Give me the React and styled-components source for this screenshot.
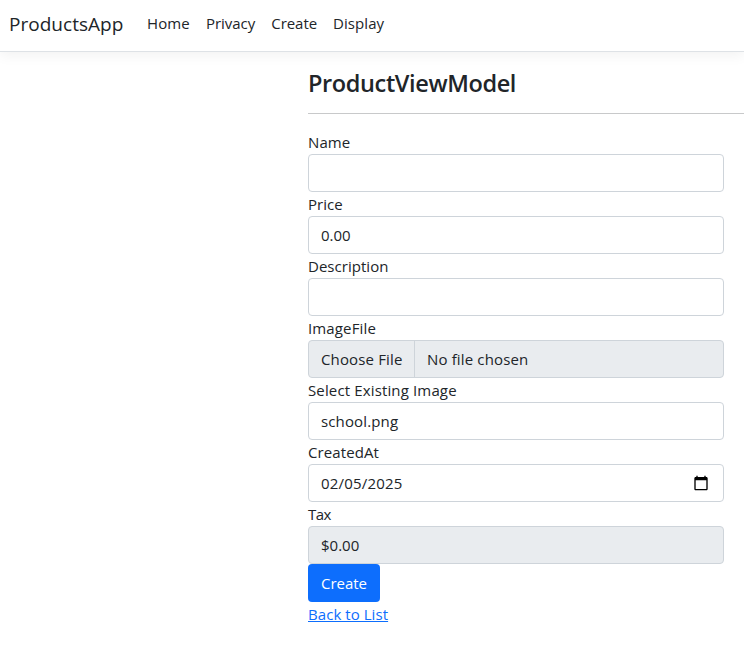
import React from 'react';
import styled, { createGlobalStyle } from 'styled-components';

const GlobalStyle = createGlobalStyle`
  *, *::before, *::after { box-sizing: border-box; }
  body {
    margin: 0;
    background: #fff;
    color: #212529;
    font: 400 15px/24px "Open Sans", "Noto Sans", sans-serif;
    overflow: hidden;
  }
`;

const Text = styled.span`
  letter-spacing: ${({ $tracking = 0.1 }) => $tracking}px;
  white-space: pre;
`;

const Header = styled.header`
  display: flex;
  align-items: center;
  height: 52px;
  padding: 0 0 5px 9px;
  border-bottom: 1px solid #dee2e6;
  box-shadow: 0 4px 12px rgba(0, 0, 0, 0.05);
`;

const Brand = styled.a`
  width: 130px;
  padding-top: 2px;
  font-size: 19px;
  line-height: 30px;
`;

const Nav = styled.nav`
  display: flex;
  gap: 16px;
  padding-left: 8px;
`;

const NavLink = styled.a`
  flex: none;
`;

const Main = styled.main`
  margin-left: 308px;
  padding-top: 17px;
`;

const Title = styled.h4`
  margin: 0;
  font-size: 23.5px;
  font-weight: 600;
  line-height: 29px;
  letter-spacing: -0.38px;
`;

const Divider = styled.hr`
  height: 1px;
  margin: 15px 0 16px;
  border: 0;
  background: #c8c9ca;
`;

const Form = styled.form`
  width: 416px;
`;

const Label = styled.label`
  display: block;
  height: 24px;
`;

const Control = styled.div`
  display: flex;
  align-items: center;
  height: 38px;
  padding: 0 12px;
  border: 1px solid #ced4da;
  border-radius: 4px;
  background: ${({ $muted }) => ($muted ? '#e9ecef' : '#fff')};
`;

const FileButton = styled.span`
  display: flex;
  flex: none;
  align-items: center;
  width: 94px;
  height: 36px;
  margin-right: 12px;
  border-right: 1px solid #ced4da;
`;

const Calendar = styled.svg`
  display: block;
  margin: 0 2px 0 auto;
`;

const Submit = styled.button`
  display: block;
  width: 72px;
  height: 38px;
  padding: 0;
  border: 0;
  border-radius: 4px;
  background: #0d6efd;
  color: #fff;
  font: inherit;
`;

const BackLink = styled.a`
  color: #0d6efd;
  text-decoration: underline;
  text-decoration-thickness: 1px;
  text-underline-offset: 1px;
`;

const NAV = [
  ['Home', 0.13],
  ['Privacy', -0.02],
  ['Create', -0.05],
  ['Display', 0.06],
];

function Field({ label, tracking, children }) {
  return (
    <div>
      <Label><Text $tracking={tracking}>{label}</Text></Label>
      {children}
    </div>
  );
}

export default function App() {
  return (
    <>
      <GlobalStyle />
      <Header>
        <Brand><Text $tracking={0.03}>ProductsApp</Text></Brand>
        <Nav>
          {NAV.map(([name, tracking]) => (
            <NavLink key={name}><Text $tracking={tracking}>{name}</Text></NavLink>
          ))}
        </Nav>
      </Header>
      <Main>
        <Title>ProductViewModel</Title>
        <Divider />
        <Form>
          <Field label="Name"><Control /></Field>
          <Field label="Price" tracking={0}>
            <Control><Text $tracking={0}>0.00</Text></Control>
          </Field>
          <Field label="Description" tracking={0.03}><Control /></Field>
          <Field label="ImageFile" tracking={0.14}>
            <Control $muted>
              <FileButton><Text $tracking={0.15}>Choose File</Text></FileButton>
              <Text $tracking={0.15}>No file chosen</Text>
            </Control>
          </Field>
          <Field label="Select Existing Image" tracking={0.14}>
            <Control><Text $tracking={0.14}>school.png</Text></Control>
          </Field>
          <Field label="CreatedAt">
            <Control>
              <Text $tracking={0.2}>02/05/2025</Text>
              <Calendar width="16" height="16" viewBox="0 0 24 24">
                <path d="M20 3h-1V1h-2v2H7V1H5v2H4c-1.1 0-2 .9-2 2v16c0 1.1.9 2 2 2h16c1.1 0 2-.9 2-2V5c0-1.1-.9-2-2-2zm0 18H4V8h16v13z" fill="#000" />
              </Calendar>
            </Control>
          </Field>
          <Field label="Tax" tracking={-0.5}>
            <Control $muted><Text $tracking={0}>$0.00</Text></Control>
          </Field>
          <Submit type="button"><Text $tracking={0}>Create</Text></Submit>
          <BackLink><Text $tracking={0.06}>Back to List</Text></BackLink>
        </Form>
      </Main>
    </>
  );
}
